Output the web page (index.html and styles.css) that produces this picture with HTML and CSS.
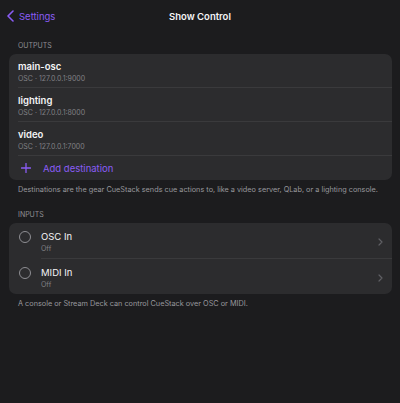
FILE: index.html
```html
<!DOCTYPE html>
<html>
<head>
<meta charset="utf-8">
<link rel="stylesheet" href="styles.css">
</head>
<body>
<header class="nav">
  <div class="back">
    <svg class="back-icon" width="7" height="12" viewBox="0 0 7 12"><path d="M6 1 L1 6 L6 11" fill="none" stroke="#8a5cf5" stroke-width="1.6" stroke-linecap="round" stroke-linejoin="round"/></svg>
    <span>Settings</span>
  </div>
  <div class="title">Show Control</div>
  <div></div>
</header>
<main class="content">
  <div class="section-label">OUTPUTS</div>
  <div class="card">
    <div class="row">
      <div class="row-title">main-osc</div>
      <div class="row-sub">OSC · 127.0.0.1:9000</div>
    </div>
    <div class="row">
      <div class="row-title">lighting</div>
      <div class="row-sub">OSC · 127.0.0.1:8000</div>
    </div>
    <div class="row">
      <div class="row-title">video</div>
      <div class="row-sub">OSC · 127.0.0.1:7000</div>
    </div>
    <div class="add-row">
      <svg class="plus" width="10" height="10" viewBox="0 0 10 10"><path d="M5 0.5 V9.5 M0.5 5 H9.5" stroke="#8a5cf5" stroke-width="1.3" stroke-linecap="round"/></svg>
      <span>Add destination</span>
    </div>
  </div>
  <p class="footer">Destinations are the gear CueStack sends cue actions to, like a video server, QLab, or a lighting console.</p>

  <div class="section-label inputs-label">INPUTS</div>
  <div class="card">
    <div class="input-row">
      <span class="radio"></span>
      <div class="input-body">
        <div class="input-text">
          <div class="row-title light">OSC In</div>
          <div class="row-sub">Off</div>
        </div>
        <svg class="chev" width="5" height="8" viewBox="0 0 5 8"><path d="M1 1 L4 4 L1 7" fill="none" stroke="#5f5f64" stroke-width="1.2" stroke-linecap="round" stroke-linejoin="round"/></svg>
      </div>
    </div>
    <div class="input-row">
      <span class="radio"></span>
      <div class="input-body">
        <div class="input-text">
          <div class="row-title light">MIDI In</div>
          <div class="row-sub">Off</div>
        </div>
        <svg class="chev" width="5" height="8" viewBox="0 0 5 8"><path d="M1 1 L4 4 L1 7" fill="none" stroke="#5f5f64" stroke-width="1.2" stroke-linecap="round" stroke-linejoin="round"/></svg>
      </div>
    </div>
  </div>
  <p class="footer footer2">A console or Stream Deck can control CueStack over OSC or MIDI.</p>
</main>
</body>
</html>
```
FILE: styles.css
```css
html, body {
  margin: 0;
  padding: 0;
  background: #1c1c1e;
  height: 100%;
}
body {
  font-family: Inter, "Liberation Sans", sans-serif;
  color: #f2f2f4;
  -webkit-font-smoothing: antialiased;
}
.nav {
  height: 32px;
  display: grid;
  grid-template-columns: 1fr auto 1fr;
  align-items: center;
}
.back {
  display: flex;
  align-items: center;
  gap: 5px;
  padding-left: 7px;
  color: #8a5cf5;
  font-size: 9.5px;
}
.back-icon {
  display: block;
}
.title {
  font-size: 9.5px;
  font-weight: 600;
  color: #f4f4f6;
}
.content {
  padding: 0 8px 0 9px;
}
.section-label {
  font-size: 7px;
  line-height: 10px;
  color: #8e8e93;
  padding-left: 9px;
  margin-top: 9px;
  margin-bottom: 3px;
}
.inputs-label {
  margin-top: 15px;
}
.card {
  background: #2c2c2e;
  border-radius: 7px;
  overflow: hidden;
}
.row {
  padding: 6px 9px 4px 0;
  margin-left: 9px;
  border-bottom: 1px solid #3a3a3c;
  height: 23px;
}
.row-title {
  font-size: 9.5px;
  line-height: 14px;
  font-weight: 600;
  color: #f4f4f6;
}
.row-title.light {
  font-weight: 400;
}
.row-sub {
  font-size: 7px;
  line-height: 9px;
  color: #808085;
}
.add-row {
  height: 24px;
  display: flex;
  align-items: center;
  padding-left: 12px;
  gap: 12px;
  color: #8a5cf5;
  font-size: 9.5px;
}
.plus {
  display: block;
}
.footer {
  margin: 5px 0 0 0;
  padding-left: 9px;
  font-size: 7.3px;
  line-height: 10px;
  color: #98989d;
}
.footer2 {
  margin-top: 5px;
}
.input-row {
  display: flex;
  align-items: stretch;
}
.radio {
  width: 10px;
  height: 10px;
  border: 1.3px solid #8e8e93;
  border-radius: 50%;
  margin: 8px 10px 0 10px;
  flex: none;
}
.input-body {
  flex: 1;
  display: flex;
  align-items: center;
  justify-content: space-between;
  padding: 7px 9px 5px 0;
  height: 23px;
}
.input-row:first-child .input-body {
  border-bottom: 1px solid #3a3a3c;
}
.chev {
  display: block;
}
```
